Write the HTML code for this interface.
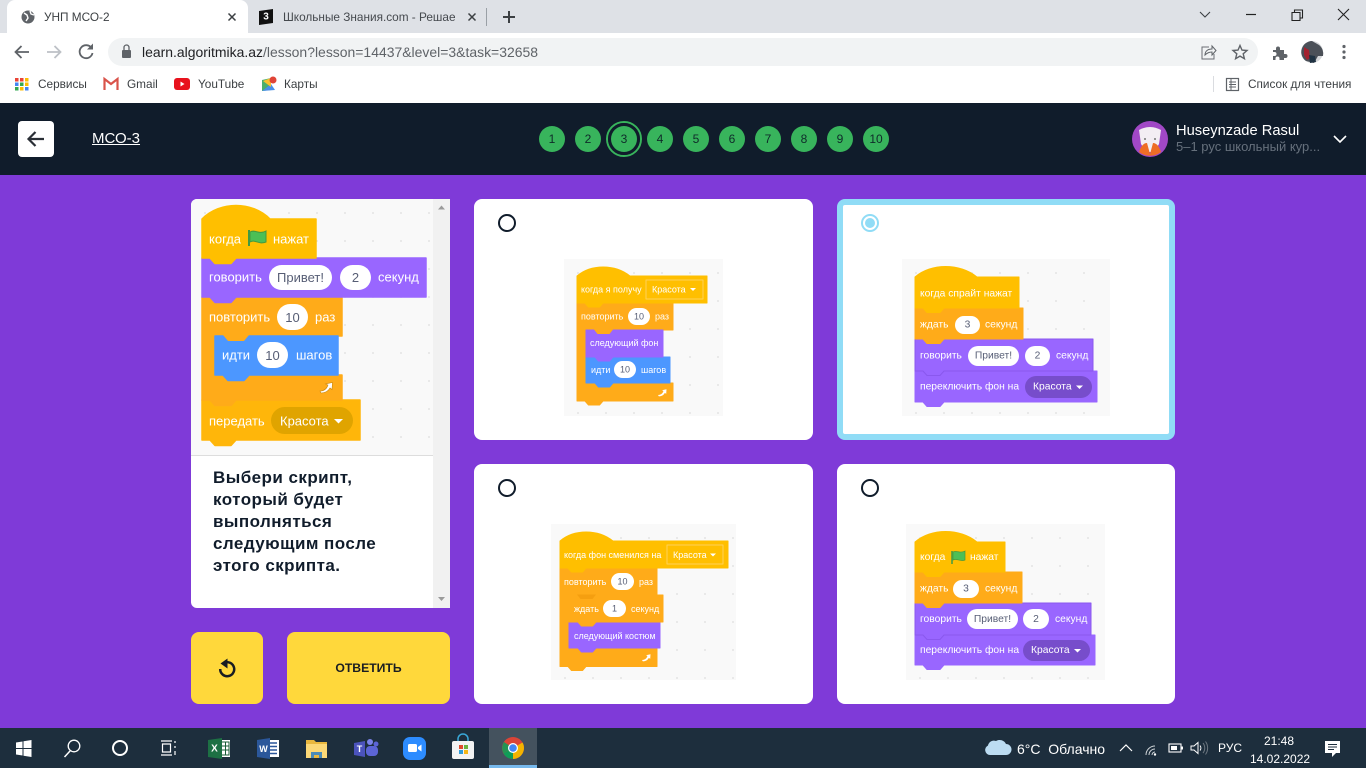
<!DOCTYPE html>
<html lang="ru"><head><meta charset="utf-8"><title>УНП МСО-2</title>
<style>
html,body{margin:0;padding:0;width:1366px;height:768px;overflow:hidden;background:#7f3ad8;font-family:"Liberation Sans",sans-serif}
.a{position:absolute;white-space:nowrap}
.c{font-size:11.8px;color:#3c4043;line-height:16px}
.card{position:absolute;background:#fff;border-radius:8px;box-sizing:border-box}
.n{position:absolute;top:126px;width:26px;height:26px;border-radius:50%;background:#38b45c;color:#0f2b2a;font-size:12px;line-height:26px;text-align:center}
.bg{background-color:#f9f9f9;background-image:radial-gradient(#e6e6e6 .8px,transparent 1.2px);background-size:28px 28px}
svg{position:absolute;left:0;top:0;overflow:visible}
svg text{font-family:"Liberation Sans",sans-serif;dominant-baseline:central}
.w{fill:#fff}.d{fill:#575e75}.m{text-anchor:middle}
.s{filter:blur(.35px)}
</style></head><body>
<!-- chrome -->
<div class="a" style="left:0;top:0;width:1366px;height:33px;background:#dee1e6"></div>
<div class="a" style="left:0;top:33px;width:1366px;height:70px;background:#fff"></div>
<div class="a" style="left:7px;top:0;width:241px;height:34px;background:#fff;border-radius:8px 8px 0 0"></div>
<div class="a c" style="left:44px;top:9px">УНП МСО-2</div>
<div class="a c" style="left:283px;top:9px;width:172px;overflow:hidden;color:#45494e">Школьные Знания.com - Решае</div>
<div class="a" style="left:108px;top:38px;width:1150px;height:28px;background:#f1f3f4;border-radius:14px"></div>
<div class="a" style="left:142px;top:44px;font-size:13.96px;line-height:16px;color:#5f6368"><span style="color:#202124">learn.algoritmika.az</span>/lesson?lesson=14437&amp;level=3&amp;task=32658</div>
<div class="a c" style="left:38px;top:76px">Сервисы</div>
<div class="a c" style="left:127px;top:76px">Gmail</div>
<div class="a c" style="left:198px;top:76px">YouTube</div>
<div class="a c" style="left:284px;top:76px">Карты</div>
<div class="a c" style="left:1248px;top:76px">Список для чтения</div>
<!-- header -->
<div class="a" style="left:0;top:103px;width:1366px;height:72px;background:#101c2b"></div>
<div class="a" style="left:18px;top:121px;width:36px;height:36px;background:#fff;border-radius:4px"></div>
<div class="a" style="left:92px;top:130px;font-size:15px;line-height:18px;color:#fff;text-decoration:underline">МСО-3</div>
<div class="n" style="left:539px">1</div><div class="n" style="left:575px">2</div>
<div class="a" style="left:606px;top:121px;width:36px;height:36px;border-radius:50%;box-sizing:border-box;border:2px solid #38b45c"></div>
<div class="n" style="left:611px">3</div><div class="n" style="left:647px">4</div><div class="n" style="left:683px">5</div><div class="n" style="left:719px">6</div><div class="n" style="left:755px">7</div><div class="n" style="left:791px">8</div><div class="n" style="left:827px">9</div><div class="n" style="left:863px">10</div>
<div class="a" style="left:1176px;top:122px;font-size:14.7px;line-height:18px;color:#fff">Huseynzade Rasul</div>
<div class="a" style="left:1176px;top:139px;font-size:13px;line-height:16px;color:#66707c">5–1 рус школьный кур...</div>
<!-- panel -->
<div class="card" style="left:191px;top:199px;width:259px;height:409px;border-radius:6px 0 0 6px;background:#fff"></div>
<div class="a bg" style="left:191px;top:199px;width:242px;height:256px;border-bottom:1px solid #ddd;border-radius:6px 0 0 0"></div>
<div class="a" style="left:433px;top:199px;width:17px;height:409px;background:#f1f1f1"></div>
<div class="a" style="left:213px;top:467px;font-size:17px;line-height:22px;font-weight:bold;color:#101c2b;letter-spacing:.45px">Выбери скрипт,<br>который будет<br>выполняться<br>следующим после<br>этого скрипта.</div>
<div class="card" style="left:191px;top:632px;width:72px;height:72px;background:#ffd83b"></div>
<div class="card" style="left:287px;top:632px;width:163px;height:72px;background:#ffd83b"></div>
<div class="a" style="left:287px;top:660px;width:163px;text-align:center;font-size:12.2px;line-height:16px;font-weight:bold;color:#1a1d22">ОТВЕТИТЬ</div>
<!-- cards -->
<div class="card" style="left:474px;top:199px;width:339px;height:241px"></div>
<div class="card" style="left:837px;top:199px;width:338px;height:241px;border:6px solid #90dcf6"></div>
<div class="card" style="left:474px;top:464px;width:339px;height:240px"></div>
<div class="card" style="left:837px;top:464px;width:338px;height:240px"></div>
<div class="a bg" style="left:564px;top:259px;width:159px;height:157px"></div>
<div class="a bg" style="left:902px;top:259px;width:208px;height:157px"></div>
<div class="a bg" style="left:551px;top:524px;width:185px;height:156px"></div>
<div class="a bg" style="left:906px;top:524px;width:199px;height:156px"></div>
<!-- taskbar -->
<div class="a" style="left:0;top:728px;width:1366px;height:40px;background:#1d2e3d"></div>
<div class="a" style="left:489px;top:728px;width:48px;height:40px;background:#44525e"></div>
<div class="a" style="left:489px;top:765px;width:48px;height:3px;background:#76b9ed"></div>
<div class="a" style="left:1017px;top:740px;font-size:14px;line-height:18px;color:#fff">6°C&nbsp; Облачно</div>
<div class="a" style="left:1218px;top:741px;font-size:12px;line-height:15px;color:#fff">РУС</div>
<div class="a" style="left:1250px;top:732px;width:58px;text-align:center;font-size:12px;line-height:18px;color:#fff">21:48<br>14.02.2022</div>

<svg width="1366" height="768" viewBox="0 0 1366 768" fill="none">
<!-- favicon, tab controls -->
<circle cx="28" cy="17" r="6.5" fill="#5f6368"/><path d="M24 13l3 2 1 3-2 3M30 11l1 3 3 1" stroke="#fff" stroke-width="1.4"/>
<path d="M228.500 13.500l7 7m0-7l-7 7M468.500 13.500l7 7m0-7l-7 7" stroke="#3c4043" stroke-width="1.5"/>
<path d="M259 11l14-2v14l-14 2z" fill="#111"/><text x="266" y="17" class="m" style="font-size:10px;font-weight:bold" fill="#fff">3</text>
<rect x="486" y="8" width="1" height="18" fill="#9aa0a6"/>
<path d="M509 11v12M503 17h12" stroke="#3c4043" stroke-width="2"/>
<path d="M1200 12l5 5 5-5" stroke="#3c4043" stroke-width="1.1"/>
<path d="M1246 14.500h10" stroke="#222" stroke-width="1.2"/>
<path d="M1292 12.500h8v8h-8zM1294.500 12.500v-2.500h8v8h-2.500" stroke="#222" stroke-width="1.1"/>
<path d="M1338 9l11 11m0-11l-11 11" stroke="#222" stroke-width="1.1"/>
<!-- nav -->
<path d="M29 52H16M21.500 46L15.500 52l6 6" stroke="#5f6368" stroke-width="1.800"/>
<path d="M47 52h13M54.500 46l6 6-6 6" stroke="#bdc1c6" stroke-width="1.800"/>
<path d="M91.500 48a6.500 6.500 0 1 0 1 5" stroke="#5f6368" stroke-width="1.800"/><path d="M93 43.500v6h-6z" fill="#5f6368"/>
<rect x="122" y="50" width="9" height="8" rx="1" fill="#5f6368"/><path d="M124 50v-2.500a2.500 2.500 0 0 1 5 0V50" stroke="#5f6368" stroke-width="1.300"/>
<path d="M1209 47h-7v12h12v-5" stroke="#6a6e73" stroke-width="1"/><path d="M1205 55c0-4 3-6 7-6v-3l4 4.500-4 4.500v-3c-3 0-5 1-7 3z" stroke="#5f6368" stroke-width="1"/>
<path d="M1240 45.500l2 4.600 5 .4-3.800 3.300 1.200 4.900-4.400-2.600-4.400 2.600 1.200-4.900-3.800-3.300 5-.4z" stroke="#5f6368" stroke-width="1.400"/>
<path d="M1273 50h3v-1.500a2 2 0 0 1 4 0V50h4v4h1.500a2 2 0 0 1 0 4H1284v2h-4.500v-1.500a2 2 0 0 0-4 0V60H1273v-4h1.500a2 2 0 0 0 0-4H1273z" fill="#5f6368"/>
<circle cx="1312" cy="52" r="11" fill="#d3d5d8"/><path d="M1312 41a11 11 0 0 0-6 20l8 2 4-7h5a11 11 0 0 0-4-11z" fill="#4b5058"/><path d="M1304 47l5 3 1 8-3 2-3-5z" fill="#a3212f"/><path d="M1309 55l6 1 1 6-6 1z" fill="#1f3242"/>
<circle cx="1344" cy="46.500" r="1.600" fill="#5f6368"/><circle cx="1344" cy="52" r="1.600" fill="#5f6368"/><circle cx="1344" cy="57.500" r="1.600" fill="#5f6368"/>
<!-- bookmarks -->
<g><rect x="15" y="78" width="3.500" height="3.500" fill="#ea4335"/><rect x="20" y="78" width="3.500" height="3.500" fill="#ea4335"/><rect x="25" y="78" width="3.500" height="3.500" fill="#fbbc04"/><rect x="15" y="82.500" width="3.500" height="3.500" fill="#4285f4"/><rect x="20" y="82.500" width="3.500" height="3.500" fill="#34a853"/><rect x="25" y="82.500" width="3.500" height="3.500" fill="#fbbc04"/><rect x="15" y="87" width="3.500" height="3.500" fill="#34a853"/><rect x="20" y="87" width="3.500" height="3.500" fill="#fbbc04"/><rect x="25" y="87" width="3.500" height="3.500" fill="#4285f4"/></g>
<path d="M104.500 90V79l6.500 5 6.500-5v11" stroke="#d9534a" stroke-width="2.200"/>
<rect x="174" y="78" width="16" height="12" rx="3" fill="#e8121d"/><path d="M180.500 81.500v5l4-2.500z" fill="#fff"/>
<path d="M262 80l9-2v12l-9 1z" fill="#4caf6c"/><path d="M262 91l9-7 4 6z" fill="#4a8fe7"/><path d="M263 81l8 6 0-9z" fill="#fbc02d"/><circle cx="273" cy="80" r="3.500" fill="#e04436"/>
<rect x="1213" y="76" width="1" height="16" fill="#dadce0"/>
<rect x="1226.500" y="78.500" width="12" height="12" stroke="#5f6368" stroke-width="1.200"/><path d="M1229 82h7M1229 84.500h7M1229 87h7M1231 79v11" stroke="#5f6368"/>
<!-- header icons -->
<path d="M44 139H28.500M35.500 132L28.500 139l7 7" stroke="#2a2f36" stroke-width="2.200"/>
<circle cx="624" cy="139" r="15" stroke="#101c2b" stroke-width="2"/>
<path d="M1334 136l6 6 6-6" stroke="#fff" stroke-width="1.600"/>
<circle cx="1150" cy="139" r="18" fill="#a148c6"/>
<path d="M1139 130q11-6 22 0l-2 14-5 8h-8l-5-8z" fill="#f3eef3"/>
<path d="M1139 152q3-9 8-9l3 11 3-11q5 0 8 9a18 18 0 0 1-22 0z" fill="#ee6d25"/>
<circle cx="1145" cy="139" r="1" fill="#777"/><circle cx="1155" cy="139" r="1" fill="#777"/>
<!-- radios -->
<circle cx="507" cy="223" r="8" stroke="#101c2b" stroke-width="2"/>
<circle cx="507" cy="488" r="8" stroke="#101c2b" stroke-width="2"/>
<circle cx="870" cy="488" r="8" stroke="#101c2b" stroke-width="2"/>
<circle cx="870" cy="223" r="8" stroke="#90dcf6" stroke-width="2"/><circle cx="870" cy="223" r="5" fill="#90dcf6"/>
<!-- scrollbar arrows -->
<path d="M438 209.500l3.500-4 3.500 4z" fill="#9a9a9a"/><path d="M438 597l3.500 4 3.500-4z" fill="#9a9a9a"/>
<!-- undo -->
<path d="M222.500 664a7 7 0 1 1-2.300 5" stroke="#1a1d22" stroke-width="2.500"/><path d="M227.500 658.500l-7 5 7 5z" fill="#1a1d22"/>

<!-- MAIN SCRIPT -->
<g stroke-width="1.500" stroke-linejoin="round">
<path d="M202 400H360V440H236l-5 5.500h-16l-5-5.500H202z" fill="#ffb60a" stroke="#ffb60a"/>
<path d="M202 297H342V336H215V375H342V400H236l-5 5.500h-16l-5-5.500H202z" fill="#ffab19" stroke="#ffab19"/>
<path d="M215 336H338V375H249l-5 5.500h-16l-5-5.500H215z" fill="#4c97ff" stroke="#4c97ff"/>
<path d="M223 335h26l-5 6h-16z" fill="#ffab19"/>
<path d="M202 258H426V297H236l-5 5.500h-16l-5-5.500H202z" fill="#9966ff" stroke="#9966ff"/>
<path d="M202 219c18-18 50-18 68 0H316V258H236l-5 5.500h-16l-5-5.500H202z" fill="#ffbf00" stroke="#ffbf00"/>
</g>
<g style="font-size:13px" class="w">
<text x="209" y="239">когда</text><text x="273" y="239">нажат</text>
<text x="209" y="277">говорить</text><text x="378" y="277">секунд</text>
<text x="209" y="317">повторить</text><text x="315" y="317">раз</text>
<text x="222" y="355">идти</text><text x="296" y="355">шагов</text>
<text x="209" y="421">передать</text>
</g>
<path d="M249 230v16" stroke="#3f9a45" stroke-width="2"/><path d="M250 232c5-3 9 3 16-1v11c-7 3-11-3-16 0z" fill="#4cbf56" stroke="#45993d"/>
<rect x="269" y="265" width="63" height="25" rx="12.500" fill="#fff"/><rect x="340" y="265" width="31" height="25" rx="12.500" fill="#fff"/>
<rect x="277" y="304" width="31" height="26" rx="13" fill="#fff"/><rect x="257" y="342" width="31" height="26" rx="13" fill="#fff"/>
<rect x="271" y="407" width="82" height="27" rx="13.500" fill="#e0a400"/>
<g style="font-size:13px" class="d">
<text x="300.500" y="277.500" class="m">Привет!</text><text x="355.500" y="277.500" class="m">2</text><text x="292.500" y="317.500" class="m">10</text><text x="272.500" y="355.500" class="m">10</text>
</g>
<text x="280" y="421" class="w" style="font-size:13px">Красота</text><path d="M334 419h9l-4.500 4.500z" fill="#fff"/>
<path d="M320 391q6 0 8-6l-2.500-1 7-1.500-.5 7-2-1.500q-3 5-9 5z" fill="#fff" stroke="#c9860e" stroke-width=".6"/>

<g class="s">
<!-- CARD 1 -->
<g stroke-width="1" stroke-linejoin="round">
<path d="M577 383V303H673V330H586V383H673V401H603l-3.500 4h-11l-3.500-4H577z" fill="#ffab19" stroke="#ffab19"/>
<path d="M586 357H670V383H613l-3.500 4h-11l-3.500-4H586z" fill="#4c97ff" stroke="#4c97ff"/>
<path d="M586 330H663V357H613l-3.500 4h-11l-3.500-4H586z" fill="#9966ff" stroke="#9966ff"/>
<path d="M594 329.500h19l-3.500 4.500h-12z" fill="#ffab19"/>
<path d="M577 276c14-12 38-12 53 0H707V303H603l-3.500 4h-11l-3.500-4H577z" fill="#ffbf00" stroke="#ffbf00"/>
<rect x="646" y="280" width="57" height="19" fill="#ffbf00" stroke="#ffd257"/>
</g>
<g style="font-size:9px" class="w">
<text x="581" y="289.500">когда я получу</text><text x="652" y="289.500">Красота</text>
<text x="581" y="316.500">повторить</text><text x="655" y="316.500">раз</text>
<text x="590" y="343">следующий фон</text><text x="591" y="370">идти</text><text x="641" y="370">шагов</text>
</g>
<path d="M690 288h6l-3 3z" fill="#fff"/>
<rect x="628" y="308" width="22" height="17" rx="8.500" fill="#fff"/><rect x="614" y="361" width="22" height="17" rx="8.500" fill="#fff"/>
<text x="639" y="316.500" class="d m" style="font-size:9px">10</text><text x="625" y="369.500" class="d m" style="font-size:9px">10</text>
<path d="M658 395q4 0 5.500-4l-1.500-.7 4.500-1-.3 4.600-1.300-1q-2 3.500-6 3.500z" fill="#fff"/>

<!-- CARD 2 -->
<g stroke-width="1" stroke-linejoin="round">
<path d="M915 371H1097V402H944l-4 4.500h-13l-4-4.500H915z" fill="#9966ff" stroke="#9966ff"/>
<path d="M915 339H1093V371H944l-4 4.500h-13l-4-4.500H915z" fill="#9966ff" stroke="#8a58ee"/>
<path d="M915 308H1023V339H944l-4 4.500h-13l-4-4.500H915z" fill="#ffab19" stroke="#ffab19"/>
<path d="M915 277c16-14 45-14 62 0H1019V308H944l-4 4.500h-13l-4-4.500H915z" fill="#ffbf00" stroke="#ffbf00"/>
</g>
<g style="font-size:10.300px" class="w">
<text x="920" y="294">когда спрайт нажат</text><text x="920" y="325">ждать</text><text x="985" y="325">секунд</text>
<text x="920" y="356">говорить</text><text x="1056" y="356">секунд</text><text x="920" y="387">переключить фон на</text>
</g>
<rect x="955" y="316" width="25" height="18" rx="9" fill="#fff"/><rect x="968" y="346" width="51" height="20" rx="10" fill="#fff"/><rect x="1025" y="346" width="25" height="20" rx="10" fill="#fff"/>
<rect x="1025" y="376" width="67" height="22" rx="11" fill="#774dcb"/>
<g style="font-size:10.300px">
<text x="967.500" y="325" class="d m">3</text><text x="993.500" y="356" class="d m">Привет!</text><text x="1037.500" y="356" class="d m">2</text><text x="1033" y="387" class="w">Красота</text>
</g>
<path d="M1076 385.500h7l-3.500 3.500z" fill="#fff"/>

<!-- CARD 3 -->
<g stroke-width="1" stroke-linejoin="round">
<path d="M560 648V568H657V595H569V648H657V666.500H586l-3.500 4h-11l-3.500-4H560z" fill="#ffab19" stroke="#ffab19"/>
<path d="M569 622H660V648H596l-3.500 4h-11l-3.500-4H569z" fill="#9966ff" stroke="#9966ff"/>
<path d="M569 595H663V622H596l-3.500 4h-11l-3.500-4H569z" fill="#ffab19" stroke="#ffab19"/>
<path d="M577 594.500h19l-3.500 4.500h-12z" fill="#f59f10"/>
<path d="M560 541c14-12 38-12 53 0H728V568H586l-3.500 4h-11l-3.500-4H560z" fill="#ffbf00" stroke="#ffbf00"/>
<rect x="667" y="545" width="56" height="19" fill="#ffbf00" stroke="#ffd257"/>
</g>
<g style="font-size:9px" class="w">
<text x="564" y="555">когда фон сменился на</text><text x="673" y="555">Красота</text>
<text x="564" y="582">повторить</text><text x="639" y="582">раз</text>
<text x="574" y="609">ждать</text><text x="631" y="609">секунд</text><text x="574" y="636">следующий костюм</text>
</g>
<path d="M710 553.500h6l-3 3z" fill="#fff"/>
<rect x="611" y="573" width="23" height="17" rx="8.500" fill="#fff"/><rect x="603" y="600" width="23" height="17" rx="8.500" fill="#fff"/>
<text x="622.500" y="581.500" class="d m" style="font-size:9px">10</text><text x="614.500" y="608.500" class="d m" style="font-size:9px">1</text>
<path d="M642 660q4 0 5.500-4l-1.500-.7 4.500-1-.3 4.600-1.300-1q-2 3.500-6 3.500z" fill="#fff"/>

<!-- CARD 4 -->
<g stroke-width="1" stroke-linejoin="round">
<path d="M915 635H1095V665H944l-4 4.500h-13l-4-4.500H915z" fill="#9966ff" stroke="#9966ff"/>
<path d="M915 603H1091V635H944l-4 4.500h-13l-4-4.500H915z" fill="#9966ff" stroke="#8a58ee"/>
<path d="M915 572H1022V603H944l-4 4.500h-13l-4-4.500H915z" fill="#ffab19" stroke="#ffab19"/>
<path d="M915 542c16-14 45-14 62 0H1005V572H944l-4 4.500h-13l-4-4.500H915z" fill="#ffbf00" stroke="#ffbf00"/>
</g>
<g style="font-size:10.300px" class="w">
<text x="920" y="557.500">когда</text><text x="970" y="557.500">нажат</text><text x="920" y="589">ждать</text><text x="985" y="589">секунд</text>
<text x="920" y="619.500">говорить</text><text x="1055" y="619.500">секунд</text><text x="920" y="650.500">переключить фон на</text>
</g>
<path d="M952 551v13" stroke="#3f9a45" stroke-width="1.500"/><path d="M953 552c4-2 7 2 12-1v9c-5 2-8-2-12 0z" fill="#4cbf56" stroke="#45993d" stroke-width=".7"/>
<rect x="953" y="580" width="26" height="18" rx="9" fill="#fff"/><rect x="967" y="609" width="51" height="20" rx="10" fill="#fff"/><rect x="1023" y="609" width="26" height="20" rx="10" fill="#fff"/>
<rect x="1023" y="640" width="67" height="21" rx="10.500" fill="#774dcb"/>
<g style="font-size:10.300px">
<text x="966" y="589" class="d m">3</text><text x="992.500" y="619.500" class="d m">Привет!</text><text x="1036" y="619.500" class="d m">2</text><text x="1031" y="650.500" class="w">Красота</text>
</g>
<path d="M1074 649h7l-3.500 3.500z" fill="#fff"/>
</g>

<!-- taskbar icons -->
<path d="M16 742.500l6.500-1V748H16zM23.500 741.200l8-1.200V748h-8zM16 749h6.500v6.500l-6.500-1zM23.500 749h8v8l-8-1.200z" fill="#fff"/>
<circle cx="74" cy="746" r="5.800" stroke="#fff" stroke-width="1.300"/><path d="M70 751l-5.500 6" stroke="#fff" stroke-width="1.500"/>
<circle cx="120" cy="748" r="7" stroke="#fff" stroke-width="2"/>
<path d="M161 741h11M161 755h11M162.500 744h8v8h-8zM175 741v2M175 746v2M175 751v4" stroke="#fff" stroke-width="1.200"/>
<rect x="212" y="740" width="18" height="17" fill="#fff"/><path d="M222 742h7v13h-7M222 746h7M222 750h7M225.500 742v13" stroke="#185c37"/>
<path d="M208 740l14-2v21l-14-2z" fill="#1d7044"/><text x="214.500" y="749" class="w m" style="font-size:10px;font-weight:bold">X</text>
<rect x="261" y="740" width="18" height="17" fill="#fff"/><path d="M270 743h7M270 746.500h7M270 750h7M270 753.500h7" stroke="#2b579a" stroke-width="1.500"/>
<path d="M257 740l13-2v21l-13-2z" fill="#2b579a"/><text x="263.500" y="749" class="w m" style="font-size:9px;font-weight:bold">W</text>
<path d="M306 740h8l2 2h11v16h-21z" fill="#e9b73e"/><rect x="306" y="744" width="21" height="14" fill="#fcd877"/><rect x="311" y="752" width="11" height="6" fill="#4a8ab8"/><rect x="314" y="755" width="5" height="3" fill="#e9b73e"/>
<circle cx="370" cy="742" r="3" fill="#7b83eb"/><circle cx="376" cy="744" r="2.500" fill="#5c65d6"/><rect x="366" y="746" width="12" height="10" rx="4" fill="#5c65d6"/><path d="M354 743l11-2v16l-11-2z" fill="#4b53bc"/><text x="359.500" y="749" class="w m" style="font-size:9px;font-weight:bold">T</text>
<rect x="403" y="737" width="23" height="23" rx="7" fill="#2d8cff"/><rect x="408" y="744" width="9" height="8" rx="1.500" fill="#fff"/><path d="M418 747l3.500-2.500v7l-3.500-2.500z" fill="#fff"/>
<path d="M458 741v-2a5 5 0 0 1 10 0v2" stroke="#39a8d8" stroke-width="1.500"/><rect x="452" y="741" width="22" height="18" rx="2" fill="#f3f3f3"/><rect x="459" y="745" width="4" height="4" fill="#e04a2f"/><rect x="464" y="745" width="4" height="4" fill="#6cb33f"/><rect x="459" y="750" width="4" height="4" fill="#2f9bd8"/><rect x="464" y="750" width="4" height="4" fill="#f6b616"/>
<circle cx="513" cy="748" r="11" fill="#db4437"/><path d="M513 748l-9.500 5.500A11 11 0 0 0 513 759z" fill="#0f9d58"/><path d="M513 748v11a11 11 0 0 0 9.500-16.500z" fill="#f4b400"/><path d="M503.500 753.500A11 11 0 0 1 504 742l9 6z" fill="#0f9d58" opacity=".9"/><circle cx="513" cy="748" r="5" fill="#fff"/><circle cx="513" cy="748" r="3.800" fill="#4285f4"/>
<!-- tray -->
<path d="M990 755a5 5 0 0 1-2-9.500 6 6 0 0 1 8-4.500 7 7 0 0 1 10 3 5.500 5.500 0 0 1 0 11z" fill="#bcdcf2"/>
<path d="M1120 751l6-6 6 6" stroke="#fff" stroke-width="1.200"/>
<path d="M1146 755a9 9 0 0 1 9-9M1149 755a6 6 0 0 1 6-6M1152 755a3 3 0 0 1 3-3" stroke="#cfd4d8"/><circle cx="1155" cy="754.500" r="1.200" fill="#fff"/>
<rect x="1169" y="744" width="12" height="8" stroke="#fff" stroke-width="1.100"/><rect x="1171" y="746" width="6" height="4" fill="#fff"/><rect x="1181.500" y="746.500" width="1.500" height="3" fill="#fff"/>
<path d="M1191 746h3l4-3.500v11l-4-3.500h-3z" stroke="#fff"/><path d="M1200 745.500a4 4 0 0 1 0 5" stroke="#fff"/><path d="M1203 743a8 8 0 0 1 0 10M1205.500 741.500a11 11 0 0 1 0 13" stroke="#6d7780"/>
<path d="M1325 741h15v12h-4l-4 4v-4h-7z" fill="#fff"/><path d="M1328 744.500h9M1328 747h9M1328 749.500h6" stroke="#1d2e3d" stroke-width="1"/>
</svg>
</body></html>
